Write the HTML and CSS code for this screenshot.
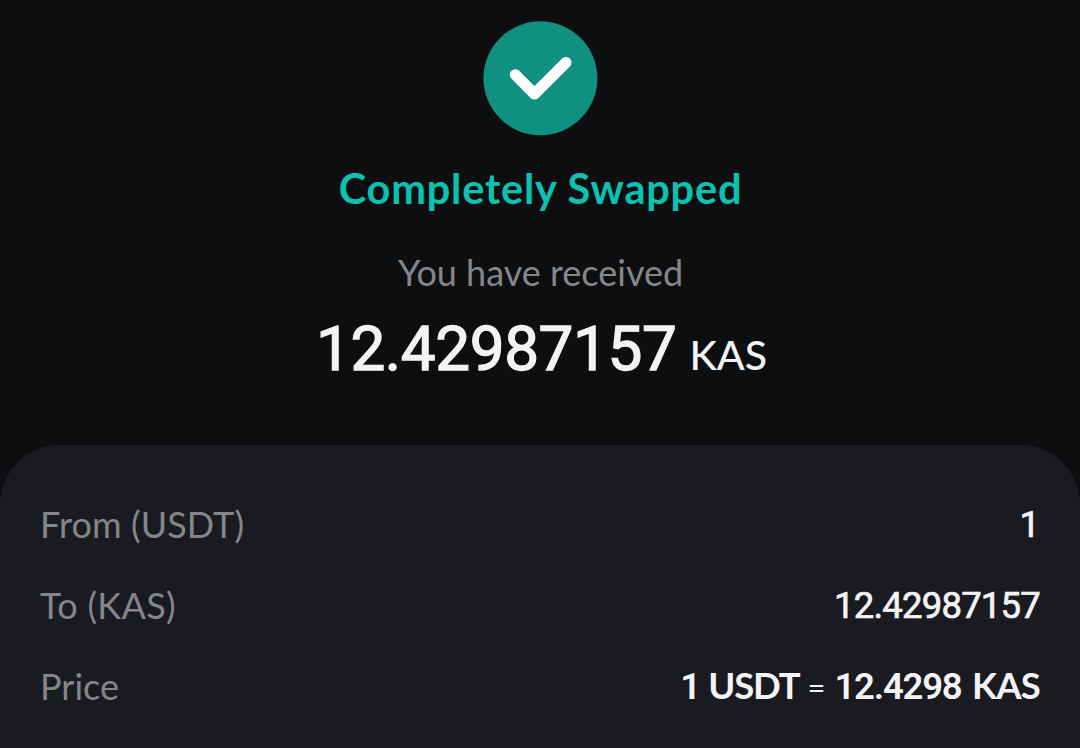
FILE: index.html
```html
<!DOCTYPE html>
<html lang="en">
<head>
<meta charset="utf-8">
<title>Completely Swapped</title>
<link rel="stylesheet" href="styles.css">
</head>
<body>
<main class="screen">
  <section class="summary">
    <svg class="badge" viewBox="0 0 116 116" aria-hidden="true">
      <circle class="badge-disc" cx="58.400" cy="57.300" r="57"/>
      <path class="badge-tick" d="M33.300 53.700 L52.500 73 L84 41.500"/>
    </svg>
    <h1 class="title">Completely Swapped</h1>
    <p class="caption">You have received</p>
    <p class="amount"><span class="amount-value">12.42987157</span><span class="amount-unit">KAS</span></p>
  </section>
  <section class="details">
    <div class="row"><span class="label label-from">From (USDT)</span><span class="value value-one">1</span></div>
    <div class="row"><span class="label label-to">To (KAS)</span><span class="value value-to">12.42987157</span></div>
    <div class="row"><span class="label">Price</span><span class="value value-price"><span class="price-number">1</span> <span class="price-unit price-from">USDT</span> <span class="price-equals">=</span> <span class="price-number">12.4298</span> <span class="price-unit">KAS</span></span></div>
  </section>
</main>
</body>
</html>
```
FILE: styles.css
```css
* { box-sizing: border-box; }
body { margin: 0; background: #0d0e10; font-family: Lato, sans-serif; }
h1, p { margin: 0; font-weight: inherit; }
.screen { height: 748px; display: flex; flex-direction: column; overflow: hidden; }
.summary { height: 445px; padding-top: 21px; display: flex; flex-direction: column; align-items: center; }
.badge { width: 116px; height: 116px; flex: none; }
.badge-disc { fill: #109080; }
.badge-tick { fill: none; stroke: #fff; stroke-width: 11; stroke-linecap: round; stroke-linejoin: round; }
.title { margin-top: 26px; padding-left: 1px; font-size: 41.5px; line-height: 50px; font-weight: 700; letter-spacing: 0.8px; color: #0bc2b2; }
.caption { margin-top: 37px; padding-left: 1px; font-size: 36px; line-height: 44px; color: #85868a; }
.amount { margin-top: 17px; padding-left: 3px; display: flex; align-items: baseline; line-height: 76px; color: #f3f3f6; gap: 13px; }
.amount-value { font-family: Roboto, sans-serif; font-size: 62px; font-weight: 400; letter-spacing: -0.4px; -webkit-text-stroke: 1.3px #f3f3f6; }
.amount-unit { font-size: 41px; font-weight: 500; }
.details { flex: 1; padding: 38px 40px 0; border-radius: 60px 60px 0 0; background: #1a1b20; }
.row { height: 81px; display: flex; align-items: center; justify-content: space-between; }
.label { font-size: 36px; line-height: 44px; color: #85868a; }
.label-from { letter-spacing: 0.1px; }
.label-to { letter-spacing: 0.3px; }
.value { padding-top: 2px; font-family: Roboto, sans-serif; font-size: 36.5px; line-height: 44px; font-weight: 400; color: #f3f3f6; }
.value-one { -webkit-text-stroke: 0.7px #f3f3f6; }
.value-to { letter-spacing: -0.8px; -webkit-text-stroke: 0.7px #f3f3f6; }
.value-price { padding-top: 0; display: flex; align-items: baseline; }
.price-number { font-weight: 600; letter-spacing: -1.2px; }
.price-unit { margin-left: 10.5px; font-family: Lato, sans-serif; font-weight: 700; letter-spacing: -0.8px; }
.price-from { margin-left: 8.5px; letter-spacing: -1.2px; }
.price-equals { margin: 0 9px 0 8px; font-family: Lato, sans-serif; font-size: 31px; font-weight: 400; }
```
